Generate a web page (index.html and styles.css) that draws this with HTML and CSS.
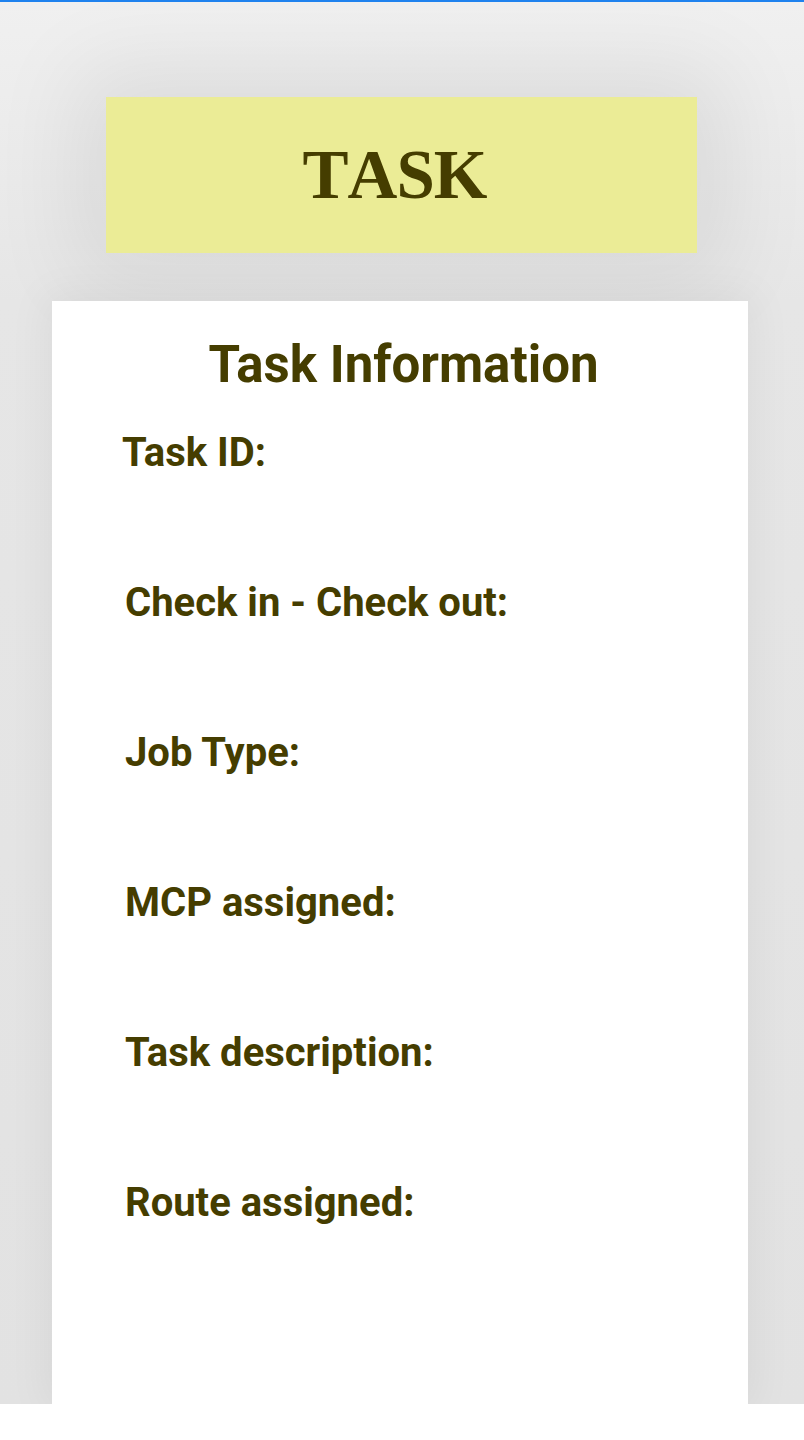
FILE: index.html
```html
<!DOCTYPE html>
<html lang="en">
<head>
<meta charset="utf-8">
<title>Task</title>
<link rel="stylesheet" href="styles.css">
</head>
<body>
<div class="screen">
  <header class="banner">
    <h1 class="banner-title">TASK</h1>
  </header>
  <section class="card">
    <h2 class="card-title">Task Information</h2>
    <div class="fields">
      <div class="field field-first">Task ID:</div>
      <div class="field">Check in - Check out:</div>
      <div class="field">Job Type:</div>
      <div class="field">MCP assigned:</div>
      <div class="field">Task description:</div>
      <div class="field">Route assigned:</div>
    </div>
  </section>
</div>
</body>
</html>
```
FILE: styles.css
```css
html, body {
  margin: 0;
  padding: 0;
  background: #ffffff;
}

.screen {
  box-sizing: border-box;
  height: 1404px;
  border-top: 2px solid #1f82ee;
  background: linear-gradient(#f0f0f0 0px, #e6e6e6 300px, #e2e2e2 1404px);
  padding-top: 95px;
  overflow: hidden;
  display: flex;
  flex-direction: column;
  align-items: flex-start;
}

.banner {
  box-sizing: border-box;
  width: 591px;
  height: 156px;
  margin-left: 106px;
  background: #ebec96;
  box-shadow: 0 0 90px 30px rgba(0, 0, 0, 0.07);
  display: flex;
  align-items: center;
  justify-content: center;
}

.banner-title {
  margin: 0;
  font-family: "Liberation Serif", serif;
  font-weight: 700;
  font-size: 69px;
  line-height: 1;
  letter-spacing: -1px;
  font-kerning: none;
  color: #453d00;
  padding-right: 14px;
}

.card {
  box-sizing: border-box;
  width: 696px;
  flex: 1;
  margin-left: 52px;
  margin-top: 48px;
  background: #ffffff;
  box-shadow: 0 0 40px 6px rgba(0, 0, 0, 0.05);
  padding-top: 33px;
  font-family: Roboto, "Liberation Sans", sans-serif;
  color: #453d00;
}

.card-title {
  margin: 0;
  font-size: 51px;
  line-height: 61px;
  font-weight: 700;
  text-align: center;
  padding-left: 7px;
}

.fields {
  display: flex;
  flex-direction: column;
  gap: 106px;
  padding-top: 36px;
  padding-left: 73px;
}

.field {
  font-size: 40px;
  line-height: 44px;
  font-weight: 700;
}

.field-first {
  margin-left: -3px;
}
```
